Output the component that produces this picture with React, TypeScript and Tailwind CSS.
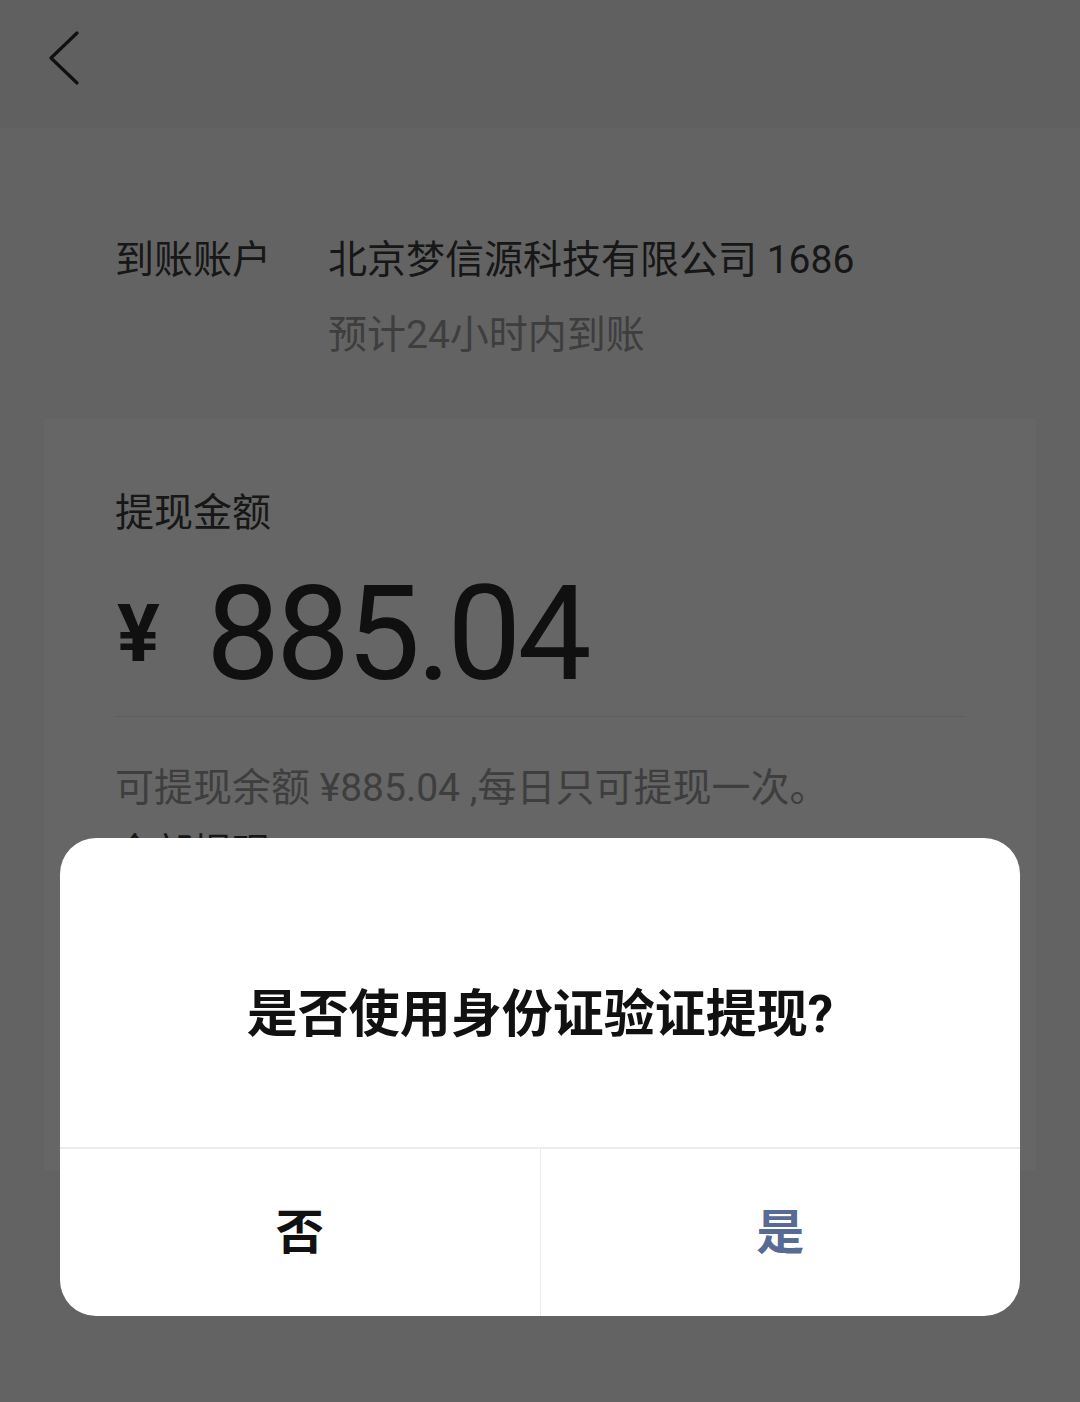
const cjk = { fontFamily: 'Roboto, "Noto Sans CJK SC", sans-serif' };

function BackIcon() {
  return (
    <svg width="34" height="54" viewBox="0 0 34 54" fill="none">
      <path d="M30 2 L4 27 L30 52" stroke="#2a2a2a" strokeWidth="3.2" strokeLinecap="round" strokeLinejoin="round" />
    </svg>
  );
}

export default function App() {
  return (
    <div className="relative min-h-[1402px] w-[1080px] overflow-hidden bg-[#f7f7f7]" style={cjk}>
      {/* nav bar */}
      <header className="h-[128px] bg-[#efefef] pl-[47px] pt-[31px]">
        <BackIcon />
      </header>

      {/* account info */}
      <section className="pt-[106px] pl-[115px] text-[39px] leading-[52px]">
        <div className="flex">
          <div className="w-[213px] text-[#3a3a3a]">到账账户</div>
          <div>
            <div className="text-[#3a3a3a]">北京梦信源科技有限公司 1686</div>
            <div className="mt-[23px] text-[#9c9c9c]">预计24小时内到账</div>
          </div>
        </div>
      </section>

      {/* amount card */}
      <section className="mx-[44px] mt-[57px] h-[752px] bg-white px-[71px] pt-[69px]">
        <div className="text-[39px] leading-[52px] text-[#3a3a3a]">提现金额</div>
        <div className="mt-[30px] flex h-[130px] items-center text-[#2a2a2a]">
          <span className="ml-[2px] text-[80px] font-bold leading-none">¥</span>
          <span className="ml-[46px] text-[132px] leading-none tracking-[-4px]">885.04</span>
        </div>
        <div className="mt-[17px] h-[1px] bg-[#ececec]" />
        <div className="mt-[45px] text-[39px] leading-[52px] text-[#9c9c9c]">可提现余额 ¥885.04 ,每日只可提现一次。</div>
        <div className="mt-[13px] text-[39px] leading-[52px] text-[#3a3a3a]">全部提现</div>
      </section>

      {/* mask + dialog */}
      <div className="absolute inset-0 flex flex-col items-center justify-end bg-black/60 pb-[86px]">
        <div className="w-[960px] overflow-hidden rounded-[36px] bg-white">
          <div className="flex h-[311px] items-center justify-center border-b-2 border-[#ececec] pt-[44px]">
            <span className="text-[51px] font-bold leading-none text-[#111111]">是否使用身份证验证提现?</span>
          </div>
          <div className="flex h-[167px]">
            <button className="flex flex-1 items-center justify-center border-r border-[#ececec] text-[48px] font-bold text-[#111111]">否</button>
            <button className="flex flex-1 items-center justify-center text-[48px] font-bold text-[#576b95]">是</button>
          </div>
        </div>
      </div>
    </div>
  );
}
